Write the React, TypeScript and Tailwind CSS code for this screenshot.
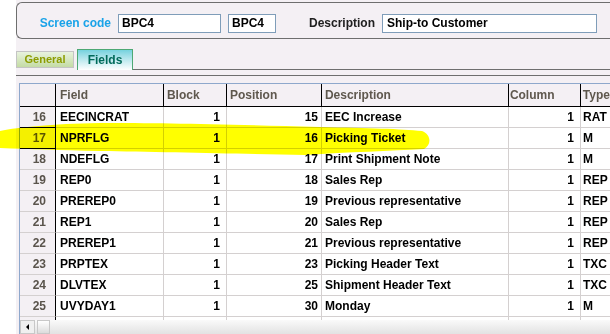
import React from "react";

const rows = [
  ["16", "EECINCRAT", "1", "15", "EEC Increase", "1", "RAT"],
  ["17", "NPRFLG", "1", "16", "Picking Ticket", "1", "M"],
  ["18", "NDEFLG", "1", "17", "Print Shipment Note", "1", "M"],
  ["19", "REP0", "1", "18", "Sales Rep", "1", "REP"],
  ["20", "PREREP0", "1", "19", "Previous representative", "1", "REP"],
  ["21", "REP1", "1", "20", "Sales Rep", "1", "REP"],
  ["22", "PREREP1", "1", "21", "Previous representative", "1", "REP"],
  ["23", "PRPTEX", "1", "23", "Picking Header Text", "1", "TXC"],
  ["24", "DLVTEX", "1", "25", "Shipment Header Text", "1", "TXC"],
  ["25", "UVYDAY1", "1", "30", "Monday", "1", "M"],
  ["", "", "", "", "", "", ""],
];

const current = 1;

const HeaderRow = () => (
  <div className="flex h-[23px] shrink-0 items-center border-b border-black bg-[#f4f0f4] text-[#5f584e]">
    <div className="h-full w-[36px] border-r border-black" />
    <div className="flex h-full w-[108px] items-center border-r border-black pl-[4px]">Field</div>
    <div className="flex h-full w-[63px] items-center border-r border-black pl-[3px]">Block</div>
    <div className="flex h-full w-[95px] items-center border-r border-black pl-[3px]">Position</div>
    <div className="flex h-full w-[187px] items-center border-r border-black pl-[3px]">Description</div>
    <div className="flex h-full w-[72px] items-center border-r border-black pl-[1px]">Column</div>
    <div className="flex h-full flex-1 items-center pl-[2px]">Type</div>
  </div>
);

const DataRow = ({ r, i }: { r: string[]; i: number }) => {
  const dark = i === current - 1 || i === current;
  return (
    <div className="flex h-[21px] shrink-0 text-black">
      <div
        className={
          "flex h-full w-[36px] items-center justify-end border-r border-b border-r-black bg-[#f4f0f4] pr-[9px] text-[#5a544c] " +
          (dark ? "border-b-black" : "border-b-[#d4d0d0]")
        }
      >
        {r[0]}
      </div>
      <div className="flex h-full w-[108px] items-center border-r border-b border-[#d4d0d0] bg-white pl-[4px]">{r[1]}</div>
      <div className="flex h-full w-[63px] items-center justify-end border-r border-b border-[#d4d0d0] bg-white pr-[6px]">{r[2]}</div>
      <div className="flex h-full w-[95px] items-center justify-end border-r border-b border-[#d4d0d0] bg-white pr-[3px]">{r[3]}</div>
      <div className="flex h-full w-[187px] items-center border-r border-b border-[#d4d0d0] bg-white pl-[3px]">{r[4]}</div>
      <div className="flex h-full w-[72px] items-center justify-end border-r border-b border-[#d4d0d0] bg-white pr-[6px]">{r[5]}</div>
      <div className="flex h-full flex-1 items-center border-b border-[#d4d0d0] bg-white pl-[2px]">{r[6]}</div>
    </div>
  );
};

export default function App() {
  return (
    <div className="relative h-[334px] w-[610px] overflow-hidden bg-white pl-[16px] font-['Liberation_Sans',Arial,sans-serif] text-[12px] font-bold">
      <div className="flex h-full flex-col bg-[#f4f0f4] pt-[2px]">
        {/* header panel */}
        <div className="flex h-[37px] shrink-0 items-start rounded-l-[6px] border-y border-l border-[#6e6e6e] pt-[11px] pl-[23px]">
          <div className="flex w-[78px] justify-end whitespace-nowrap pr-[7px] leading-[19px] text-[#1aa3e8]">Screen code</div>
          <div className="h-[19px] w-[103px] border border-[#7f9db9] bg-white pl-[3px] leading-[17px] text-black">BPC4</div>
          <div className="ml-[7px] h-[19px] w-[48px] border border-[#7f9db9] bg-white pl-[3px] leading-[17px] text-black">BPC4</div>
          <div className="flex w-[106px] justify-end whitespace-nowrap pr-[7px] leading-[19px] text-[#202020]">Description</div>
          <div className="h-[19px] w-[215px] border border-[#7f9db9] bg-white pl-[4px] leading-[17px] text-black">Ship-to Customer</div>
        </div>

        {/* tabs */}
        <div className="mt-[10px] flex h-[21px] shrink-0 items-end">
          <div className="mb-[2px] flex h-[17px] w-[58px] items-center justify-center border border-[#c4c4c4] bg-linear-to-b from-[#e8f2de] to-[#c4dca4] text-[11px] text-[#8c9c00]">
            General
          </div>
          <div className="ml-[3px] flex h-[21px] w-[56px] items-center justify-center border-x border-t border-[#4ea874] bg-linear-to-b from-[#74d2de] to-white text-[#006a5a]">
            Fields
          </div>
          <div className="h-full flex-1 border-b border-[#6e6e6e]" />
        </div>

        <div className="mt-[5px] shrink-0 border-t border-[#6e6e6e]" />

        {/* grid */}
        <div className="mt-[7px] ml-[3px] flex min-h-0 flex-1 flex-col border-t border-l border-[#8ea8cc]">
          <HeaderRow />
          <div className="flex min-h-0 flex-1 flex-col overflow-hidden">
            {rows.map((r, i) => (
              <DataRow key={i} r={r} i={i} />
            ))}
          </div>
          <div className="flex h-[14px] shrink-0 items-center bg-linear-to-b from-[#fafafa] to-[#e2e2e2]">
            <div className="flex h-[14px] w-[15px] items-center justify-center border border-[#c8c8c8] bg-[#f0f0f0]">
              <div className="h-0 w-0 border-y-[3px] border-r-[3px] border-y-transparent border-r-black" />
            </div>
            <div className="ml-[2px] h-[14px] w-[13px] border border-[#c8c8c8] bg-linear-to-b from-white to-[#dcdcdc]" />
          </div>
        </div>
      </div>

      <svg
        className="pointer-events-none absolute top-0 left-0 mix-blend-multiply"
        width="610"
        height="334"
        viewBox="0 0 610 334"
      >
        <path
          d="M0,131 C20,127 50,124 100,123 C160,123 220,124 320,127 C370,128 400,129 422,131 C431,134 432,145 424,149 C390,151 350,152 305,155 C250,154 160,152 100,151 C60,150 30,149 0,148 Z"
          fill="#ffff00"
        />
      </svg>
    </div>
  );
}
